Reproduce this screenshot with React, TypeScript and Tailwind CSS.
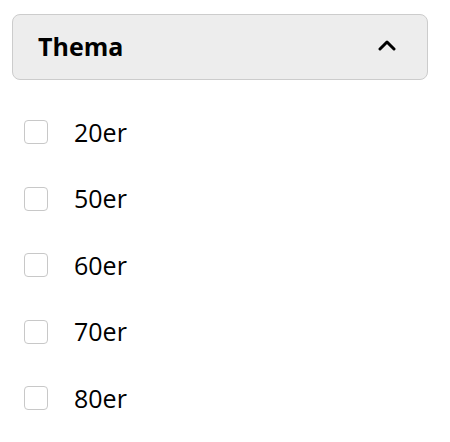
const options = ["20er", "50er", "60er", "70er", "80er"];

export default function App() {
  return (
    <div className="bg-white px-3 pt-[14px] font-['Open_Sans',sans-serif] text-black">
      <div className="flex h-[66px] w-[416px] items-center justify-between rounded-lg border border-[#cccccc] bg-[#ededed] pl-[25px] pr-[31px]">
        <span className="text-[25px] font-bold">Thema</span>
        <svg width="18" height="12" viewBox="0 0 18 12" fill="none" className="mb-[4px]">
          <polyline points="2,10 9,3 16,10" stroke="black" strokeWidth="3" strokeLinecap="round" strokeLinejoin="round" />
        </svg>
      </div>
      <ul className="mt-[19px]">
        {options.map((option) => (
          <li key={option} className="flex h-[66.5px] items-center pl-3">
            <span className="h-6 w-6 shrink-0 rounded border border-[#c8c8c8] bg-white" />
            <span className="ml-[26px] text-[25px]">{option}</span>
          </li>
        ))}
      </ul>
    </div>
  );
}
